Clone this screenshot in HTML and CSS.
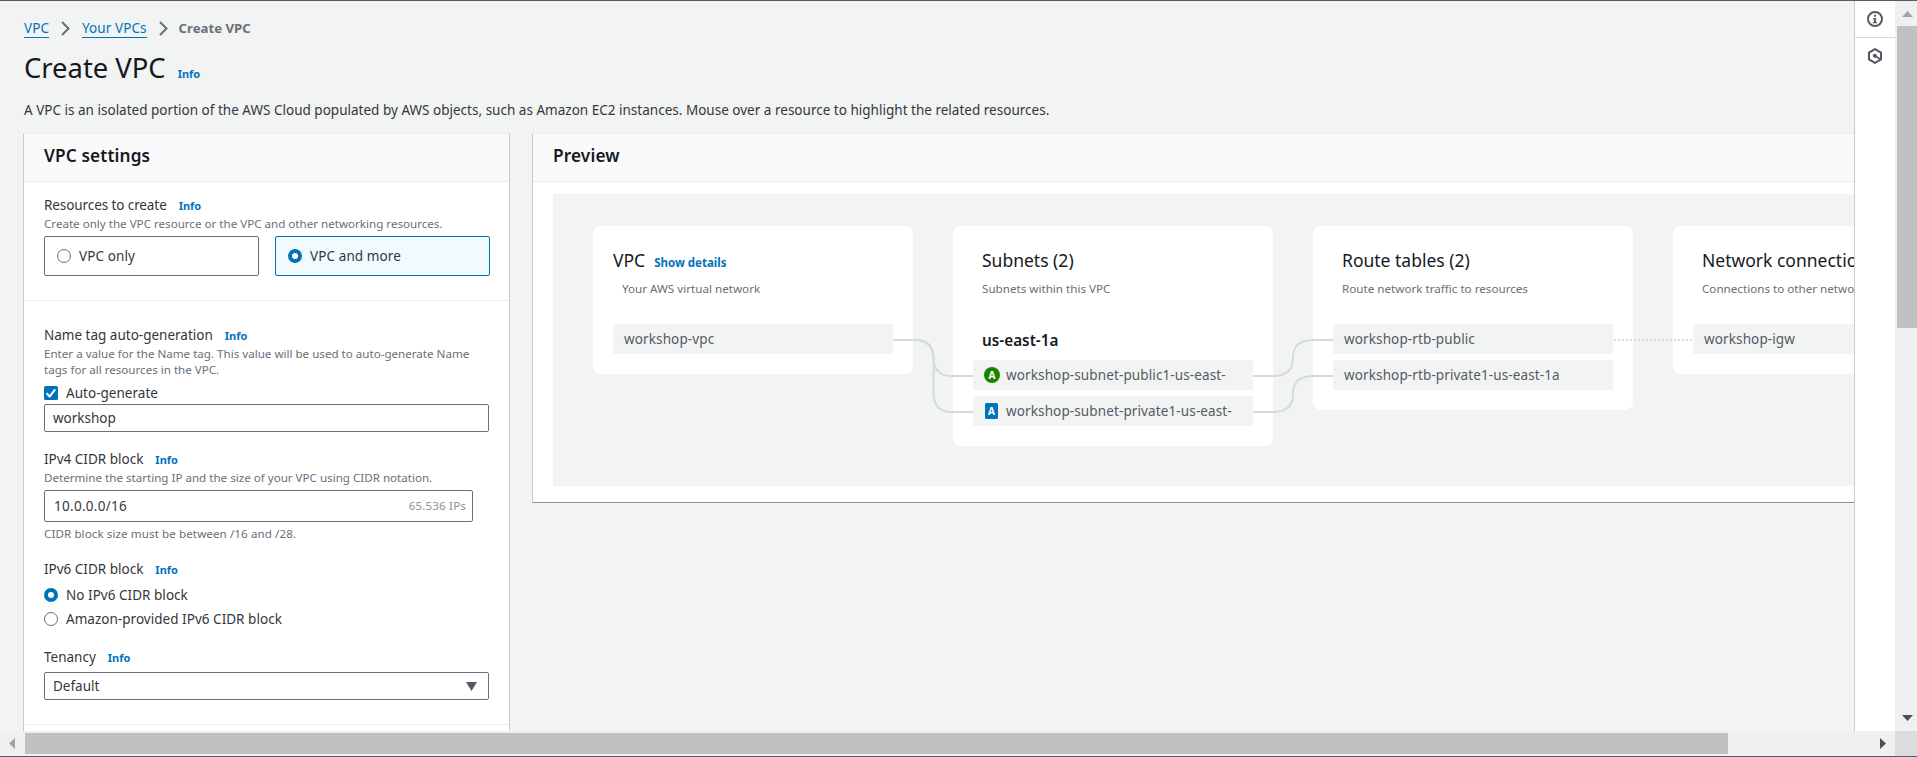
FILE: index.html
```html
<!DOCTYPE html>
<html lang="en">
<head>
<meta charset="utf-8">
<title>Create VPC</title>
<link rel="stylesheet" href="styles.css">
</head>
<body>
<div class="window">
  <main class="page">
    <nav class="crumbs">
      <a class="crumb">VPC</a>
      <svg class="chevron" width="9" height="15" viewBox="0 0 9 15"><path d="M1 1l6.500 6.500L1 14"/></svg>
      <a class="crumb">Your VPCs</a>
      <svg class="chevron" width="9" height="15" viewBox="0 0 9 15"><path d="M1 1l6.500 6.500L1 14"/></svg>
      <b class="current">Create VPC</b>
    </nav>
    <div class="heading"><h1>Create VPC</h1><a class="info">Info</a></div>
    <p class="intro">A VPC is an isolated portion of the AWS Cloud populated by AWS objects, such as Amazon EC2 instances. Mouse over a resource to highlight the related resources.</p>
    <div class="columns">
      <section class="panel settings">
        <h2 class="panel-head">VPC settings</h2>
        <div class="group resources">
          <div class="label"><span class="tight">Resources to create</span><a class="info">Info</a></div>
          <p class="hint">Create only the VPC resource or the VPC and other networking resources.</p>
          <div class="tiles">
            <div class="tile"><i class="radio"></i><span>VPC only</span></div>
            <div class="tile selected"><i class="radio on"></i><span>VPC and more</span></div>
          </div>
        </div>
        <div class="group options">
          <div class="label"><span>Name tag auto-generation</span><a class="info">Info</a></div>
          <p class="hint">Enter a value for the Name tag. This value will be used to auto-generate Name<br>tags for all resources in the VPC.</p>
          <div class="choice auto"><svg class="check" width="14" height="14" viewBox="0 0 14 14"><rect width="14" height="14" rx="1.500"/><path d="M2.500 7.200l3.200 3.200L11.200 3.300"/></svg><span>Auto-generate</span></div>
          <div class="field name"><span>workshop</span></div>
          <div class="label ipv4"><span>IPv4 CIDR block</span><a class="info">Info</a></div>
          <p class="hint">Determine the starting IP and the size of your VPC using CIDR notation.</p>
          <div class="field cidr"><span class="address">10.0.0.0/16</span><span class="count">65.536 IPs</span></div>
          <p class="hint constraint">CIDR block size must be between /16 and /28.</p>
          <div class="label ipv6"><span>IPv6 CIDR block</span><a class="info">Info</a></div>
          <div class="choice none"><i class="radio on"></i><span>No IPv6 CIDR block</span></div>
          <div class="choice amazon"><i class="radio"></i><span>Amazon-provided IPv6 CIDR block</span></div>
          <div class="label tenancy"><span>Tenancy</span><a class="info">Info</a></div>
          <div class="field select"><span>Default</span><svg width="11" height="9" viewBox="0 0 11 9"><path d="M0 0h11L5.500 9z"/></svg></div>
        </div>
      </section>
      <section class="panel preview">
        <h2 class="panel-head">Preview</h2>
        <div class="canvas">
          <article class="card vpc">
            <h3>VPC<a class="details">Show details</a></h3>
            <p>Your AWS virtual network</p>
            <div class="items"><div class="item">workshop-vpc</div></div>
          </article>
          <article class="card">
            <h3>Subnets (2)</h3>
            <p>Subnets within this VPC</p>
            <h4>us-east-1a</h4>
            <div class="items">
              <div class="item"><span class="badge public">A</span>workshop-subnet-public1-us-east-</div>
              <div class="item"><span class="badge private">A</span>workshop-subnet-private1-us-east-</div>
            </div>
          </article>
          <article class="card">
            <h3>Route tables (2)</h3>
            <p>Route network traffic to resources</p>
            <div class="items">
              <div class="item">workshop-rtb-public</div>
              <div class="item">workshop-rtb-private1-us-east-1a</div>
            </div>
          </article>
          <article class="card">
            <h3>Network connections (1)</h3>
            <p>Connections to other networks</p>
            <div class="items"><div class="item">workshop-igw</div></div>
          </article>
          <svg class="links" width="1480" height="292" viewBox="0 0 1480 292">
            <path d="M340 146h22q18 0 18.500 18t18.500 18h21"/>
            <path d="M340 146h22q18.500 0 18.500 19v34q0 19 18.500 19h21"/>
            <path d="M700 182h20q20 0 20-18t20-18h20"/>
            <path d="M700 218h20q20 0 20-18t20-18h20"/>
            <path class="dotted" d="M1061 146h79"/>
          </svg>
        </div>
      </section>
    </div>
  </main>
  <aside class="rail">
    <div class="tool">
      <svg width="16" height="16" viewBox="0 0 16 16"><circle class="line" cx="8" cy="8" r="7"/><path d="M7 3.800h2v2H7zM6 7h3v4h1v1.300H6V11h1V8.200H6z"/></svg>
    </div>
    <div class="tool">
      <svg width="16" height="16" viewBox="0 0 16 16"><path class="line" d="M8 1.100l6 3.450v6.900L8 14.900l-6-3.450v-6.900z"/><circle cx="7.800" cy="7.800" r="2"/><path class="line" d="M8 8l5 3"/></svg>
    </div>
  </aside>
  <div class="vscroll">
    <svg width="11" height="6" viewBox="0 0 11 6"><path d="M5.500 0L11 6H0z" fill="#a3a3a3"/></svg>
    <div class="vthumb"></div>
    <svg class="down" width="11" height="6" viewBox="0 0 11 6"><path d="M0 0h11L5.500 6z" fill="#505050"/></svg>
  </div>
  <div class="hscroll">
    <svg width="6" height="11" viewBox="0 0 6 11"><path d="M6 0v11L0 5.500z" fill="#a3a3a3"/></svg>
    <div class="hthumb"></div>
    <svg class="right" width="6" height="11" viewBox="0 0 6 11"><path d="M0 0v11l6-5.500z" fill="#505050"/></svg>
  </div>
  <div class="corner"></div>
</div>
</body>
</html>
```
FILE: styles.css
```css
* { box-sizing: border-box; }
body {
  margin: 0;
  font: 13.5px/20px "Noto Sans", sans-serif;
  color: #33373d;
  background: #f2f3f3;
  overflow: hidden;
}
h1, h2, h3, h4, p { margin: 0; }
svg { display: block; flex: none; }
.window {
  display: grid;
  grid-template: 730px 25px / minmax(0, 1fr) 41px 22px;
  height: 757px;
  border-top: 1px solid #545b64;
  border-bottom: 1px solid #545b64;
}
.page {
  overflow: hidden;
  padding: 17px 0 0 23px;
  white-space: nowrap;
}

/* Breadcrumbs and page heading */
.crumbs { display: flex; gap: 12px; height: 20px; padding-left: 1px; }
.crumb {
  height: 20px;
  line-height: 21px;
  color: #0073bb;
  border-bottom: 1px solid #0073bb;
  letter-spacing: .08px;
}
.chevron { margin-top: 2.500px; fill: none; stroke: #687078; stroke-width: 2; }
.current { margin-left: -1px; font-size: 13.2px; color: #687078; }
.heading {
  display: flex;
  align-items: baseline;
  gap: 12px;
  height: 36px;
  margin-top: 12px;
  padding-left: 1px;
}
h1 { font-size: 27.4px; font-weight: 400; line-height: 36px; color: #16191f; }
.info { font-size: 11px; font-weight: 700; color: #0073bb; }
.intro { margin-top: 14px; padding-left: 1px; letter-spacing: .012px; }

/* Panels */
.columns { display: flex; align-items: flex-start; gap: 22px; margin-top: 13px; }
.panel {
  flex: none;
  background: #fff;
  border: 1px solid #c6cccc;
  border-top-color: #eaeded;
}
.panel-head {
  height: 48px;
  padding-left: 20px;
  font-size: 17.2px;
  font-weight: 600;
  line-height: 43px;
  letter-spacing: .15px;
  color: #16191f;
  background: #fafafa;
  border-bottom: 1px solid #eaeded;
}
.settings { width: 487px; height: 700px; }
.preview { width: 1522px; border-bottom-color: #879596; padding-bottom: 16px; }

/* Form */
.group { padding: 24px 19px 24px 20px; border-bottom: 1px solid #eaeded; }
.resources { padding-top: 13px; }
.label { display: flex; gap: 12px; align-items: baseline; height: 20px; }
.tight { letter-spacing: -.09px; }
.hint { margin-top: 1px; font-size: 11.6px; line-height: 16px; color: #687078; }
.tiles { display: grid; grid-template-columns: 1fr 1fr; gap: 16px; margin-top: 4px; }
.tile {
  display: flex;
  align-items: center;
  gap: 8px;
  height: 40px;
  padding-left: 12px;
  border: 1px solid #687078;
  border-radius: 2px;
  letter-spacing: .1px;
}
.selected { border-color: #0073bb; background: #f1faff; }
.radio {
  flex: none;
  width: 14px;
  height: 14px;
  border: 1px solid #687078;
  border-radius: 50%;
  background: #fff;
}
.radio.on { border: 4px solid #0073bb; }
.choice { display: flex; align-items: center; gap: 8px; height: 20px; letter-spacing: .03px; }
.auto { margin-top: 5px; }
.none { margin-top: 6px; }
.amazon { margin-top: 4px; }
.check rect { fill: #0073bb; }
.check path { fill: none; stroke: #fff; stroke-width: 2; }
.field {
  display: flex;
  align-items: center;
  justify-content: space-between;
  width: 445px;
  height: 28px;
  padding-left: 8px;
  border: 1px solid #687078;
  border-radius: 2px;
}
.name { margin-top: 1px; }
.cidr { width: 429px; height: 32px; margin-top: 4px; padding-right: 6px; padding-left: 9px; }
.address { letter-spacing: .28px; }
.count { font-size: 11.6px; letter-spacing: .15px; color: #879596; }
.constraint { margin-top: 4px; letter-spacing: .09px; }
.ipv4, .ipv6 { margin-top: 17px; }
.tenancy { margin-top: 18px; }
.select { margin-top: 5px; padding-right: 11px; }
.select svg { fill: #545b64; }

/* Resource map */
.canvas {
  position: relative;
  display: flex;
  align-items: flex-start;
  gap: 40px;
  width: 1480px;
  height: 292px;
  margin: 12px 20px 0;
  padding: 32px 40px;
  background: #f2f3f3;
}
.card { width: 320px; padding: 22px 20px 20px; background: #fff; border-radius: 8px; }
h3 {
  height: 24px;
  padding-left: 9px;
  font-size: 17.5px;
  font-weight: 400;
  line-height: 24px;
  color: #16191f;
}
.vpc h3 { padding-left: 0; }
.details { margin-left: 9px; font-size: 11.5px; font-weight: 700; color: #0073bb; }
.card p { margin-top: 9px; padding-left: 9px; font-size: 11.65px; line-height: 16px; color: #687078; }
h4 { margin: 33px 0 -16px; padding-left: 9px; font-size: 15.3px; font-weight: 600; color: #16191f; }
.items { display: grid; gap: 6px; margin-top: 27px; }
h4 + .items { margin-top: 26px; }
.item {
  display: flex;
  align-items: center;
  height: 30px;
  padding-left: 11px;
  border-radius: 2px;
  background: #f2f3f3;
  color: #545b64;
  letter-spacing: .12px;
}
.badge {
  width: 16px;
  height: 16px;
  margin-right: 6px;
  border-radius: 50%;
  font-size: 10px;
  font-weight: 700;
  line-height: 16px;
  letter-spacing: 0;
  text-align: center;
  color: #fff;
}
.public { background: #1d8102; }
.private { width: 13px; margin: 0 8px 0 1px; border-radius: 1.500px; background: #0073bb; }
.links { position: absolute; top: 0; left: 0; fill: none; stroke: #d5dbdb; stroke-width: 2; }
.dotted { stroke-dasharray: 2 2; }

/* Side rail */
.rail { background: #fff; border-left: 1px solid #c8cccc; }
.tool {
  display: grid;
  place-items: center;
  height: 36px;
}
.tool:first-child { height: 37px; border-bottom: 1px solid #d5dbdb; }
.tool svg { fill: #545b64; }
.tool .line { fill: none; stroke: #545b64; stroke-width: 2; }

/* Scrollbars */
.vscroll {
  display: flex;
  flex-direction: column;
  padding: 10px 0 10px 2px;
  background: #f0f0f0;
}
.vscroll svg { margin-left: 5px; }
.vthumb { height: 302px; margin-top: 9px; background: #c1c1c1; }
.vscroll .down { margin-top: auto; }
.hscroll {
  grid-column: 1 / 3;
  display: flex;
  align-items: center;
  padding: 0 9px;
  background: #f0f0f0;
}
.hthumb { width: 1703px; height: 21px; margin-left: 10px; background: #c1c1c1; }
.right { margin-left: auto; }
.corner { background: #dcdcdc; }
```
